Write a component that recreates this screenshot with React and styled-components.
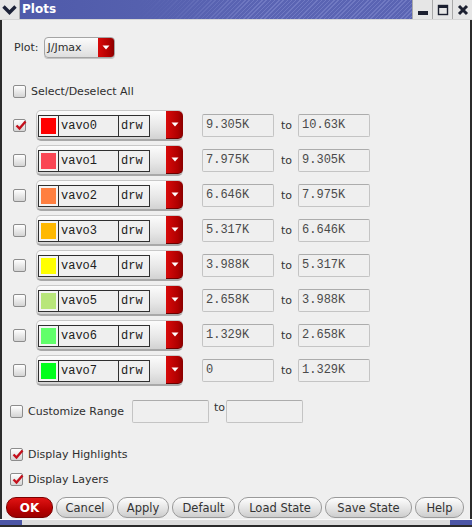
import React from 'react';
import styled, { createGlobalStyle } from 'styled-components';

const GlobalStyle = createGlobalStyle`
    html, body {
        margin: 0;
        padding: 0;
        background: #efefef;
        overflow: hidden;
    }
    body {
        font-family: "DejaVu Sans", "Liberation Sans", sans-serif;
        font-size: 11px;
        color: #2e2e2e;
    }
`

const Window = styled.div`
    width: 472px;
    height: 527px;
    display: flex;
    flex-direction: column;
    background: #efefef;
    overflow: hidden;
`

const TitleBar = styled.div`
    height: 20px;
    flex-shrink: 0;
    display: flex;
    flex-direction: row;
    align-items: stretch;
    box-sizing: border-box;
    border-bottom: 1px solid #d6d6d6;
    background:
        linear-gradient(90deg, #e6e6e6 0 19px, #b4b4b4 19px 20px, transparent 20px),
        repeating-linear-gradient(135deg, #5a64b3 0 2px, #7079c2 2px 3px);
`

const TitleIcon = styled.svg`
    flex: 0 0 20px;
    display: block;
`

const Title = styled.span`
    flex: 1 1 auto;
    font-size: 12px;
    font-weight: bold;
    color: #ffffff;
    line-height: 19px;
    padding-left: 2px;
    background: linear-gradient(90deg, #4f5aaa 0, #5560ae 30%, rgba(90, 100, 179, 0) 60%);
`

const WinButton = styled.span`
    display: flex;
    flex: 0 0 20px;
    box-sizing: border-box;
    background: #e6e6e6;
    border-left: 1px solid #a8a8a8;
    align-items: center;
    justify-content: center;
`

const Frame = styled.div`
    flex-grow: 1;
    display: flex;
    flex-direction: column;
    border-left: 2px solid #2b2b2b;
    border-right: 2px solid #2b2b2b;
`

const Content = styled.div`
    flex-grow: 1;
    display: flex;
    flex-direction: column;
    padding-left: 8px;
`

const Row = styled.div`
    display: flex;
    flex-direction: row;
    align-items: center;
    height: ${ props => props.h || 16 }px;
    margin-top: ${ props => props.mt || 0 }px;
    padding-left: ${ props => props.indent || 0 }px;
`

const Label = styled.span`
    white-space: nowrap;
    margin-left: ${ props => props.ml || 0 }px;
    width: ${ props => props.w ? props.w + 'px' : 'auto' };
    flex-shrink: 0;
`

const Box = styled.div`
    width: 11px;
    height: 11px;
    flex-shrink: 0;
    border: 1px solid #8c8c8c;
    border-radius: 2px;
    background: linear-gradient(#ffffff, #d4d4d4);
    position: relative;
`

const Check = styled.svg`
    position: absolute;
    left: 1px;
    top: -1px;
`

const Checkbox = ({ checked }) => (
    <Box>
        { checked && (
            <Check width="12" height="12" viewBox="0 0 12 12">
                <path d="M1.5 6.5 L4.5 9.5 L10.5 2.5" fill="none" stroke="#c4101c" strokeWidth="2.4" strokeLinejoin="miter" />
            </Check>
        ) }
    </Box>
)

const Combo = styled.div`
    width: 71px;
    height: 21px;
    margin-left: 6px;
    display: flex;
    flex-direction: row;
    border: 1px solid #a4a4a4;
    border-radius: 4px;
    background: linear-gradient(#fbfbfb, #dedede);
    box-shadow: 0 1px 0 #c4c4c4;
    overflow: hidden;
    box-sizing: border-box;
`

const ComboText = styled.div`
    flex-grow: 1;
    padding-left: 2px;
    line-height: 19px;
`

const RedArrow = styled.div`
    width: ${ props => props.w || 16 }px;
    align-self: stretch;
    flex-shrink: 0;
    display: flex;
    align-items: center;
    justify-content: center;
    background: linear-gradient(90deg, #d80a0a, #b00000 70%, #8a0000);
    border-radius: ${ props => props.tall ? '0 5px 5px 0' : '0' };
    border-bottom: ${ props => props.tall ? '1px solid #6a0000' : '0' };
`

const Arrow = () => (
    <svg width="8" height="5" viewBox="0 0 8 5">
        <path d="M0.5 0.5 L7.5 0.5 L4 4.5 Z" fill="#ffffff" />
    </svg>
)

const LayerList = styled.div`
    margin-top: 11px;
    display: flex;
    flex-direction: column;
`

const LayerRow = styled.div`
    display: flex;
    flex-direction: row;
    align-items: center;
    height: 31px;
    margin-bottom: 4px;
    padding-left: 3px;
`

const LayerPicker = styled.div`
    width: 147px;
    height: 31px;
    margin-left: 10px;
    display: flex;
    flex-direction: row;
    align-items: center;
    box-sizing: border-box;
    padding-left: 1px;
    border-radius: 5px;
    background: linear-gradient(#fcfcfc, #e6e6e6 60%, #d2d2d2);
    border: 1px solid #c8c8c8;
    border-bottom: 2px solid #a8a8a8;
`

const LayerInfo = styled.div`
    display: flex;
    flex-direction: row;
    height: 22px;
    border: 1px solid #303030;
    box-sizing: border-box;
    margin-right: 16px;
    margin-top: 1px;
`

const SwatchCell = styled.div`
    width: 20px;
    padding: 2px;
    box-sizing: border-box;
    border-right: 1px solid #303030;
    background: #f4f4f4;
`

const Swatch = styled.div`
    width: 100%;
    height: 100%;
    background: ${ props => props.colour };
`

const MonoCell = styled.div`
    width: ${ props => props.w }px;
    box-sizing: border-box;
    padding-left: 2px;
    font-family: "Liberation Mono", "DejaVu Sans Mono", monospace;
    font-size: 12px;
    line-height: 20px;
    color: #202020;
    background: #efefef;
    border-right: ${ props => props.last ? '0' : '1px solid #303030' };
`

const Field = styled.div`
    width: ${ props => props.w || 72 }px;
    height: 23px;
    flex-shrink: 0;
    box-sizing: border-box;
    margin-left: ${ props => props.ml || 0 }px;
    border: 1px solid #c4c4c4;
    border-top-color: #acacac;
    border-radius: 2px;
    background: #efefef;
    padding-left: 3px;
    font-family: "Liberation Mono", "DejaVu Sans Mono", monospace;
    font-size: 12px;
    line-height: 21px;
    color: #4a4a4a;
`

const To = styled.span`
    margin-left: ${ props => props.ml || 7 }px;
    margin-right: ${ props => props.mr || 6 }px;
    color: #333;
    align-self: ${ props => props.top ? 'flex-start' : 'center' };
    margin-top: ${ props => props.top ? 2 : 0 }px;
`

const ButtonBar = styled.div`
    height: 21px;
    margin-bottom: 1px;
    display: flex;
    flex-direction: row;
    padding-left: 4px;
    gap: 3px;
`

const Button = styled.div`
    width: ${ props => props.w }px;
    height: 21px;
    flex-shrink: 0;
    box-sizing: border-box;
    border-radius: 10px;
    border: 1px solid ${ props => props.primary ? '#7a0000' : '#9a9a9a' };
    background: ${ props => props.primary
        ? 'linear-gradient(#e01414, #b80000 60%, #9a0000)'
        : 'linear-gradient(#fdfdfd, #e4e4e4 55%, #cdcdcd)' };
    color: ${ props => props.primary ? '#ffffff' : '#333333' };
    font-weight: ${ props => props.primary ? 'bold' : 'normal' };
    font-size: ${ props => props.primary ? 12 : 11.5 }px;
    display: flex;
    align-items: center;
    justify-content: center;
`

const BottomEdge = styled.div`
    height: 8px;
    flex-shrink: 0;
    display: flex;
    flex-direction: row;
    background: #dcdcdc;
    border-top: 1px solid #f8f8f8;
    border-bottom: 2px solid #2b2b2b;
    box-sizing: border-box;
`

const Corner = styled.div`
    width: 22px;
    background: #4c56a6;
`

const EdgeFill = styled.div`
    flex-grow: 1;
`

const layers = [
    { name: 'vavo0', colour: '#ff0000', from: '9.305K', to: '10.63K', on: true },
    { name: 'vavo1', colour: '#fa4654', from: '7.975K', to: '9.305K' },
    { name: 'vavo2', colour: '#ff7f40', from: '6.646K', to: '7.975K' },
    { name: 'vavo3', colour: '#ffb800', from: '5.317K', to: '6.646K' },
    { name: 'vavo4', colour: '#ffff00', from: '3.988K', to: '5.317K' },
    { name: 'vavo5', colour: '#b8e67a', from: '2.658K', to: '3.988K' },
    { name: 'vavo6', colour: '#60ff6a', from: '1.329K', to: '2.658K' },
    { name: 'vavo7', colour: '#00ff1c', from: '0', to: '1.329K' },
]

const buttons = [
    { label: 'OK', w: 47, primary: true },
    { label: 'Cancel', w: 58 },
    { label: 'Apply', w: 52 },
    { label: 'Default', w: 63 },
    { label: 'Load State', w: 84 },
    { label: 'Save State', w: 87 },
    { label: 'Help', w: 49 },
]

const App = () => {
    return (
        <Window>
            <GlobalStyle />
            <TitleBar>
                <TitleIcon width="20" height="19" viewBox="0 0 20 19">
                    <rect x="0" y="0" width="19" height="19" fill="#e6e6e6" />
                    <path d="M3.5 6.5 L9.5 12.5 L15.5 6.5" fill="none" stroke="#1c2238" strokeWidth="3.4" />
                </TitleIcon>
                <Title>Plots</Title>
                <WinButton>
                    <svg width="12" height="12" viewBox="0 0 12 12">
                        <rect x="1" y="7" width="10" height="4" fill="#1c2030" />
                    </svg>
                </WinButton>
                <WinButton>
                    <svg width="12" height="12" viewBox="0 0 12 12">
                        <rect x="1.5" y="1.5" width="9" height="9" fill="none" stroke="#1c2030" strokeWidth="1.4" />
                        <rect x="1" y="1" width="10" height="3" fill="#1c2030" />
                    </svg>
                </WinButton>
                <WinButton>
                    <svg width="12" height="12" viewBox="0 0 12 12">
                        <path d="M2 2 L10 10 M10 2 L2 10" stroke="#1c2030" strokeWidth="3" />
                    </svg>
                </WinButton>
            </TitleBar>
            <Frame>
                <Content>
                    <Row h={ 22 } mt={ 16 } indent={ 4 }>
                        <Label>Plot:</Label>
                        <Combo>
                            <ComboText>J/Jmax</ComboText>
                            <RedArrow w={ 16 }><Arrow /></RedArrow>
                        </Combo>
                    </Row>
                    <Row mt={ 25 } indent={ 3 }>
                        <Checkbox />
                        <Label ml={ 5 }>Select/Deselect All</Label>
                    </Row>
                    <LayerList>
                        { layers.map(layer => (
                            <LayerRow key={ layer.name }>
                                <Checkbox checked={ layer.on } />
                                <LayerPicker>
                                    <LayerInfo>
                                        <SwatchCell><Swatch colour={ layer.colour } /></SwatchCell>
                                        <MonoCell w={ 60 }>{ layer.name }</MonoCell>
                                        <MonoCell w={ 30 } last>drw</MonoCell>
                                    </LayerInfo>
                                    <RedArrow w={ 17 } tall><Arrow /></RedArrow>
                                </LayerPicker>
                                <Field ml={ 19 }>{ layer.from }</Field>
                                <To>to</To>
                                <Field>{ layer.to }</Field>
                            </LayerRow>
                        )) }
                    </LayerList>
                    <Row h={ 24 } mt={ 9 }>
                        <Checkbox />
                        <Label ml={ 5 } w={ 104 }>Customize Range</Label>
                        <Field w={ 77 } />
                        <To ml={ 5 } mr={ 1 } top>to</To>
                        <Field w={ 77 } />
                    </Row>
                    <Row mt={ 23 }>
                        <Checkbox checked />
                        <Label ml={ 5 }>Display Highlights</Label>
                    </Row>
                    <Row mt={ 9 }>
                        <Checkbox checked />
                        <Label ml={ 5 }>Display Layers</Label>
                    </Row>
                </Content>
                <ButtonBar>
                    { buttons.map(b => (
                        <Button key={ b.label } w={ b.w } primary={ b.primary }>{ b.label }</Button>
                    )) }
                </ButtonBar>
            </Frame>
            <BottomEdge>
                <Corner />
                <EdgeFill />
                <Corner />
            </BottomEdge>
        </Window>
    )
}

export default App
